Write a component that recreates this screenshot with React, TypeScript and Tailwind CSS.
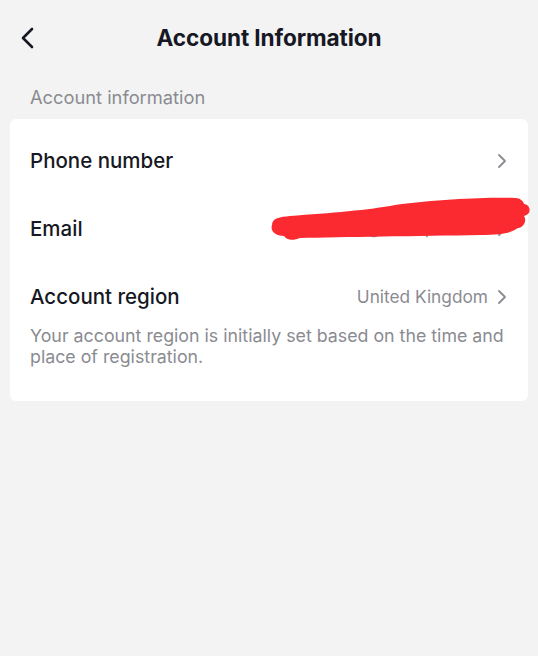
import React from "react";

const Chevron = ({ className = "" }: { className?: string }) => (
  <svg width="10" height="16" viewBox="0 0 10 16" className={className} fill="none">
    <path d="M2 2 L8 8 L2 14" stroke="currentColor" strokeWidth="1.8" strokeLinecap="round" strokeLinejoin="round" />
  </svg>
);

export default function App() {
  return (
    <div
      className="relative w-[538px] h-[656px] bg-[#f3f3f3] overflow-hidden"
      style={{ fontFamily: "Inter, 'Noto Sans', Roboto, sans-serif" }}
    >
      <div className="relative h-[76px] flex items-center justify-center">
        <div className="absolute left-[18px] top-[26px] text-[#161823]">
          <svg width="20" height="24" viewBox="0 0 20 24" fill="none">
            <path d="M14 3 L5 12 L14 21" stroke="currentColor" strokeWidth="2.6" strokeLinecap="round" strokeLinejoin="round" />
          </svg>
        </div>
        <h1 className="text-[22.6px] font-bold text-[#161823] tracking-[-0.1px]">Account Information</h1>
      </div>
      <div className="px-[30px] h-[43px] flex items-center text-[18.3px] text-[#8a8b91]">Account information</div>
      <div className="mx-[10px] bg-white rounded-[6px] pt-[8px] pb-[34px]">
        <div className="h-[68px] flex items-center justify-between pl-[20px] pr-[21px]">
          <span className="text-[20.5px] font-medium text-[#161823]">Phone number</span>
          <Chevron className="text-[#8a8b91]" />
        </div>
        <div className="h-[68px] flex items-center justify-between pl-[20px] pr-[21px]">
          <span className="text-[20.5px] font-medium text-[#161823]">Email</span>
          <div className="flex items-center gap-[8px] text-[#8a8b91]">
            <span className="text-[17px]">mail@example.com</span>
            <Chevron />
          </div>
        </div>
        <div className="h-[68px] flex items-center justify-between pl-[20px] pr-[21px]">
          <span className="text-[20.5px] font-medium text-[#161823]">Account region</span>
          <div className="flex items-center gap-[9px] text-[#8a8b91]">
            <span className="text-[17.3px]">United Kingdom</span>
            <Chevron />
          </div>
        </div>
        <p className="-mt-[6px] pl-[20px] pr-[10px] text-[17.8px] leading-[21px] text-[#8a8b91]">
          Your account region is initially set based on the time and place of registration.
        </p>
      </div>
      <svg className="absolute left-0 top-0 pointer-events-none" width="538" height="656" viewBox="0 0 538 656">
        <path
          d="M272 225 C272 218 280 217 290 216 C330 213 370 210 395 205 C440 199 490 197 515 198 C522 198 524 203 524 204 C531 205 532 214 524 216 C527 220 524 228 518 228 C512 232 505 235 480 235 C420 236 340 237 300 238 C293 241 286 240 284 236 C275 236 270 231 272 225 Z"
          fill="#fb2a30"
        />
      </svg>
    </div>
  );
}
